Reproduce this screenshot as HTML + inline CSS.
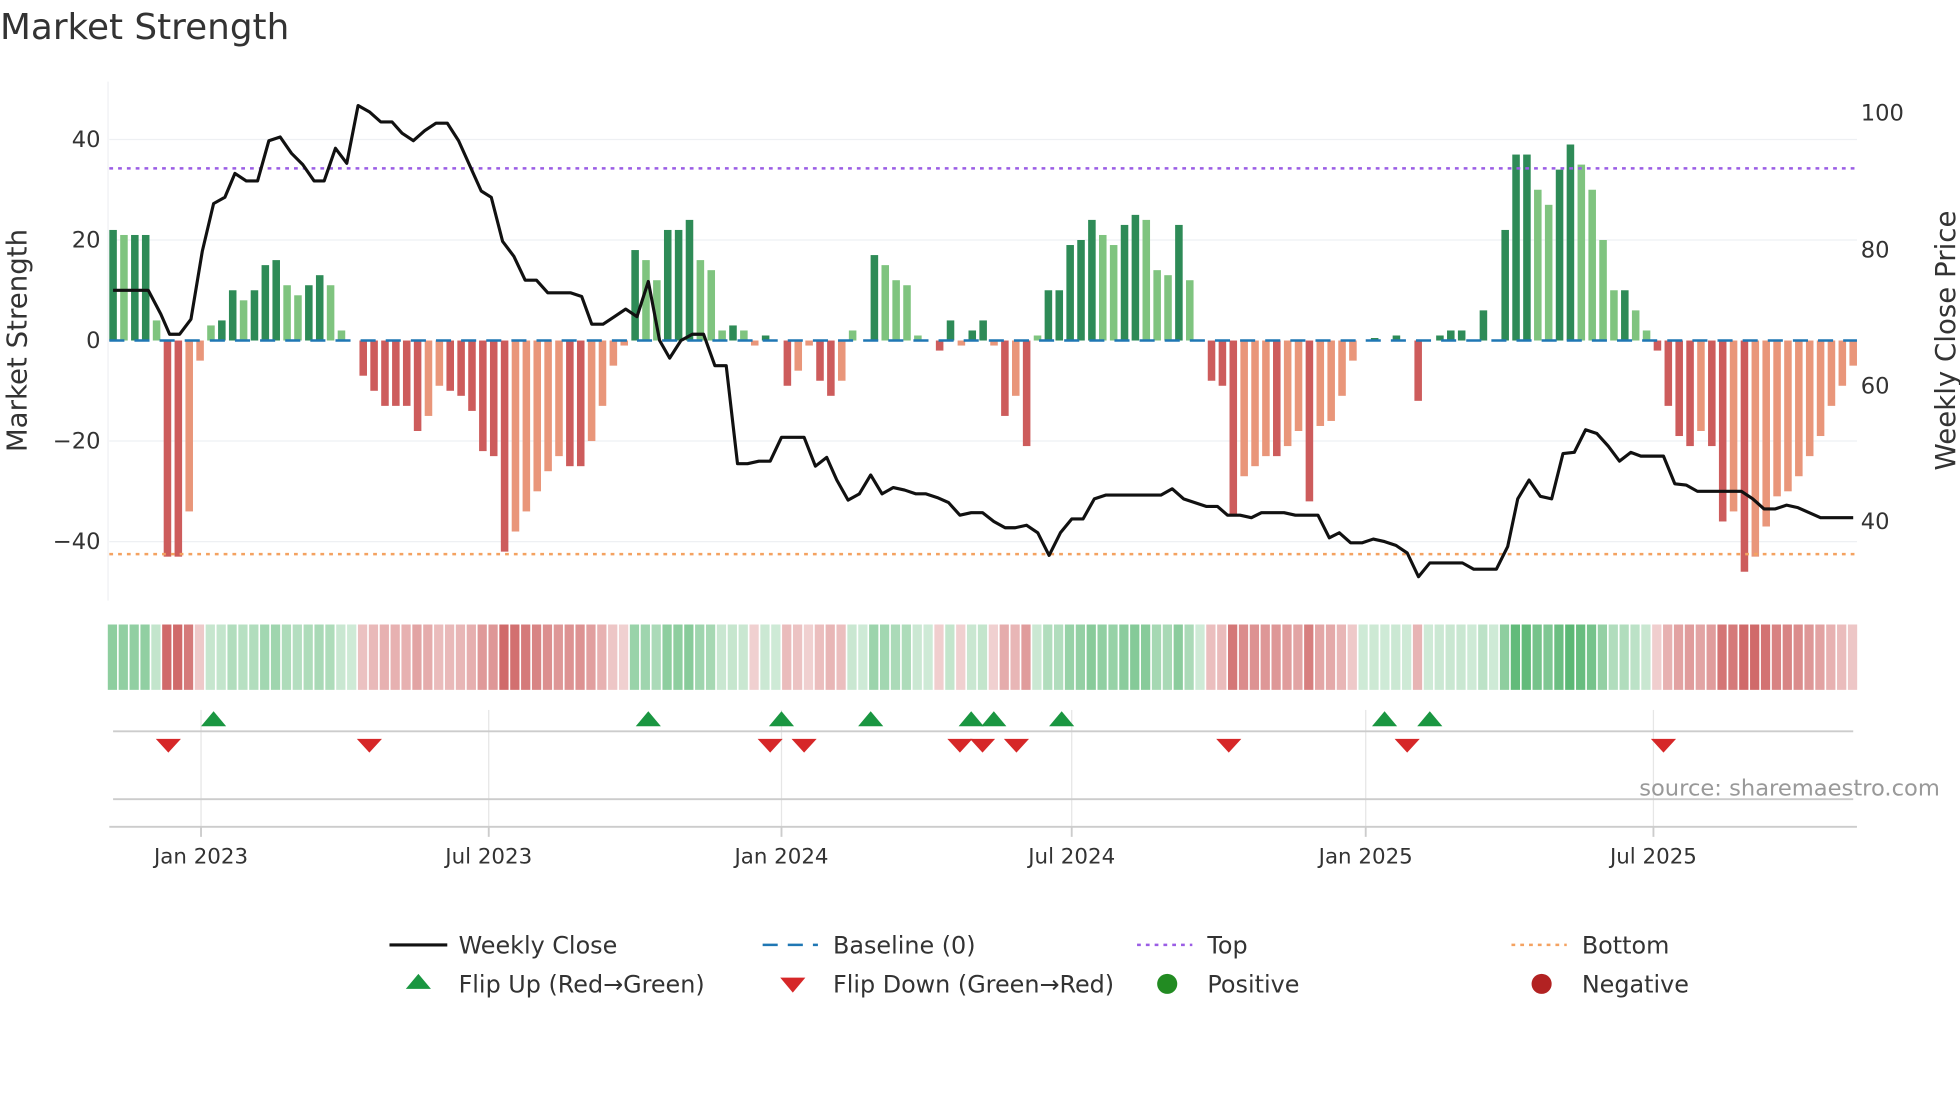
<!DOCTYPE html>
<html><head><meta charset="utf-8"><style>
html,body{margin:0;padding:0;background:#fff;}
svg{display:block;}
text{font-family:"DejaVu Sans","Liberation Sans",sans-serif;fill:#333;}
</style></head><body>
<svg id="s" width="1960" height="1102" viewBox="0 0 1560 877" preserveAspectRatio="none" xmlns="http://www.w3.org/2000/svg">
<rect width="1560" height="877" fill="#fff"/>
<text x="0" y="31" font-size="28.5">Market Strength</text>
<g stroke="#eef0f3" stroke-width="1">
<line x1="87" y1="111" x2="1478" y2="111"/><line x1="87" y1="191" x2="1478" y2="191"/>
<line x1="87" y1="351" x2="1478" y2="351"/><line x1="87" y1="431" x2="1478" y2="431"/>
<line x1="86" y1="65" x2="86" y2="478"/>
</g>
<g id="bars"></g>
<line x1="87" y1="271" x2="1478" y2="271" stroke="#1f77b4" stroke-width="2" stroke-dasharray="12,8"/>
<line x1="87" y1="134" x2="1478" y2="134" stroke="#9b5de5" stroke-width="2" stroke-dasharray="3,4"/>
<line x1="87" y1="441" x2="1478" y2="441" stroke="#f4a261" stroke-width="2" stroke-dasharray="3,4"/>
<polyline id="price" fill="none" stroke="#111" stroke-width="2.5" stroke-linejoin="round"/>
<g id="heat"></g>
<g stroke="#e6e6e6" stroke-width="1">
<line x1="160" y1="565" x2="160" y2="658"/><line x1="389" y1="565" x2="389" y2="658"/><line x1="622" y1="565" x2="622" y2="658"/><line x1="853" y1="565" x2="853" y2="658"/><line x1="1087" y1="565" x2="1087" y2="658"/><line x1="1316" y1="565" x2="1316" y2="658"/>
</g>
<g stroke="#ccc" stroke-width="1.5">
<line x1="90" y1="582" x2="1475" y2="582"/><line x1="90" y1="636" x2="1475" y2="636"/><line x1="87" y1="658" x2="1478" y2="658"/>
<line x1="160" y1="658" x2="160" y2="666"/><line x1="389" y1="658" x2="389" y2="666"/><line x1="622" y1="658" x2="622" y2="666"/><line x1="853" y1="658" x2="853" y2="666"/><line x1="1087" y1="658" x2="1087" y2="666"/><line x1="1316" y1="658" x2="1316" y2="666"/>
</g>
<g id="mk"></g>
<text x="1544" y="633" font-size="18" text-anchor="end" style="fill:#999">source: sharemaestro.com</text>
<g font-size="17" text-anchor="middle">
<text x="160" y="687">Jan 2023</text><text x="389" y="687">Jul 2023</text><text x="622" y="687">Jan 2024</text><text x="853" y="687">Jul 2024</text><text x="1087" y="687">Jan 2025</text><text x="1316" y="687">Jul 2025</text>
</g>
<g font-size="18" text-anchor="end">
<text x="80" y="117">40</text><text x="80" y="197">20</text><text x="80" y="277">0</text><text x="80" y="357">−20</text><text x="80" y="437">−40</text>
</g>
<g font-size="18">
<text x="1481" y="96">100</text><text x="1481" y="205">80</text><text x="1481" y="313">60</text><text x="1481" y="421">40</text>
</g>
<text transform="translate(21,271) rotate(-90)" font-size="22" text-anchor="middle">Market Strength</text>
<text transform="translate(1556,271) rotate(-90)" font-size="22" text-anchor="middle">Weekly Close Price</text>
<g font-size="19">
<line x1="310" y1="752" x2="356" y2="752" stroke="#111" stroke-width="2.5"/><text x="365" y="759">Weekly Close</text>
<line x1="607" y1="752" x2="651" y2="752" stroke="#1f77b4" stroke-width="2" stroke-dasharray="12,8"/><text x="663" y="759">Baseline (0)</text>
<line x1="905" y1="752" x2="949" y2="752" stroke="#9b5de5" stroke-width="2" stroke-dasharray="3,4"/><text x="961" y="759">Top</text>
<line x1="1203" y1="752" x2="1247" y2="752" stroke="#f4a261" stroke-width="2" stroke-dasharray="3,4"/><text x="1259" y="759">Bottom</text>
<polygon points="333,775 343,787 323,787" fill="#1a9641"/><text x="365" y="790">Flip Up (Red→Green)</text>
<polygon points="621,778 641,778 631,790" fill="#d62728"/><text x="663" y="790">Flip Down (Green→Red)</text>
<circle cx="929" cy="783" r="8" fill="#228b22"/><text x="961" y="790">Positive</text>
<circle cx="1227" cy="783" r="8" fill="#b22222"/><text x="1259" y="790">Negative</text>
</g>
</svg>
<script>
var NS="http://www.w3.org/2000/svg";
var v=[22,21,21,21,4,-43,-43,-34,-4,3,4,10,8,10,15,16,11,9,11,13,11,2,0,-7,-10,-13,-13,-13,-18,-15,-9,-10,-11,-14,-22,-23,-42,-38,-34,-30,-26,-23,-25,-25,-20,-13,-5,-1,18,16,12,22,22,24,16,14,2,3,2,-1,1,0,-9,-6,-1,-8,-11,-8,2,0,17,15,12,11,1,0,-2,4,-1,2,4,-1,-15,-11,-21,1,10,10,19,20,24,21,19,23,25,24,14,13,23,12,0,-8,-9,-35,-27,-25,-23,-23,-21,-18,-32,-17,-16,-11,-4,0,0.5,0,1,0,-12,0,1,2,2,0,6,0,22,37,37,30,27,34,39,35,30,20,10,10,6,2,-2,-13,-19,-21,-18,-21,-36,-34,-46,-43,-37,-31,-30,-27,-23,-19,-13,-9,-5];
var n=v.length,st=(1475-90)/(n-1);
var bars=document.getElementById('bars'),heat=document.getElementById('heat');
function r(g,x,y,w,h,f){var e=document.createElementNS(NS,'rect');e.setAttribute('x',x);e.setAttribute('y',y);e.setAttribute('width',w);e.setAttribute('height',h);e.setAttribute('fill',f);g.appendChild(e);}
for(var i=0;i<n;i++){var x=90+i*st,a=v[i],p=i?v[i-1]:0;
 var grow=Math.abs(a)>=Math.abs(p);
 var c=a>=0?(grow?'#2e8b57':'#7fc47f'):(grow?'#cd5c5c':'#e9967a');
 if(a>=0)r(bars,x-3,271-a*4,6,a*4,c);else r(bars,x-3,271,6,-a*4,c);
 var t=Math.min(1,Math.abs(a)/40)*0.6+0.25;
 var hc=a>0?'rgba(60,170,90,'+t+')':(a<0?'rgba(200,80,80,'+t+')':'rgba(60,170,90,0.25)');
 r(heat,x-4.2,497,st-1.3,52,hc);}
var pts=[90,231,118,231,128,250,135,266,143,266,152,254,161,200,170,162,179,157,187,138,196,144,205,144,214,112,223,109,232,122,241,131,250,144,258,144,267,118,276,130,285,84,294,89,303,97,312,97,320,106,329,112,338,104,347,98,356,98,365,112,374,132,383,152,391,157,400,192,409,204,418,223,427,223,436,233,445,233,454,233,463,236,471,258,480,258,489,252,498,246,507,252,516,224,525,271,533,285,542,271,551,266,560,266,569,291,578,291,587,369,595,369,604,367,613,367,622,348,631,348,640,348,649,371,658,364,666,382,675,398,684,393,693,378,702,393,711,388,720,390,729,393,737,393,746,396,755,400,764,410,773,408,782,408,791,415,800,420,808,420,817,418,826,424,835,442,844,424,853,413,862,413,871,397,880,394,889,394,898,394,906,394,915,394,924,394,933,389,942,397,951,400,960,403,969,403,977,410,987,410,996,412,1004,408,1013,408,1022,408,1031,410,1040,410,1049,410,1058,428,1066,424,1075,432,1084,432,1093,429,1102,431,1111,434,1120,440,1129,459,1138,448,1147,448,1156,448,1164,448,1173,453,1182,453,1191,453,1200,435,1208,397,1217,382,1226,395,1235,397,1244,361,1253,360,1262,342,1271,345,1280,355,1289,367,1298,360,1306,363,1315,363,1324,363,1333,385,1342,386,1351,391,1360,391,1369,391,1378,391,1386,391,1395,397,1404,405,1413,405,1422,402,1431,404,1440,408,1449,412,1458,412,1466,412,1475,412];
var s='';for(var k=0;k<pts.length;k+=2)s+=pts[k]+','+pts[k+1]+' ';
document.getElementById('price').setAttribute('points',s);
var mk=document.getElementById('mk');
function poly(p,f){var e=document.createElementNS(NS,'polygon');e.setAttribute('points',p);e.setAttribute('fill',f);mk.appendChild(e);}
[170,516,622,693,773,791,845,1102,1138].forEach(function(x){poly(x+',566 '+(x+10)+',578 '+(x-10)+',578','#1a9641');});
[134,294,613,640,764,782,809,978,1120,1324].forEach(function(x){poly((x-10)+',588 '+(x+10)+',588 '+x+',599','#d62728');});
</script>
</body></html>
